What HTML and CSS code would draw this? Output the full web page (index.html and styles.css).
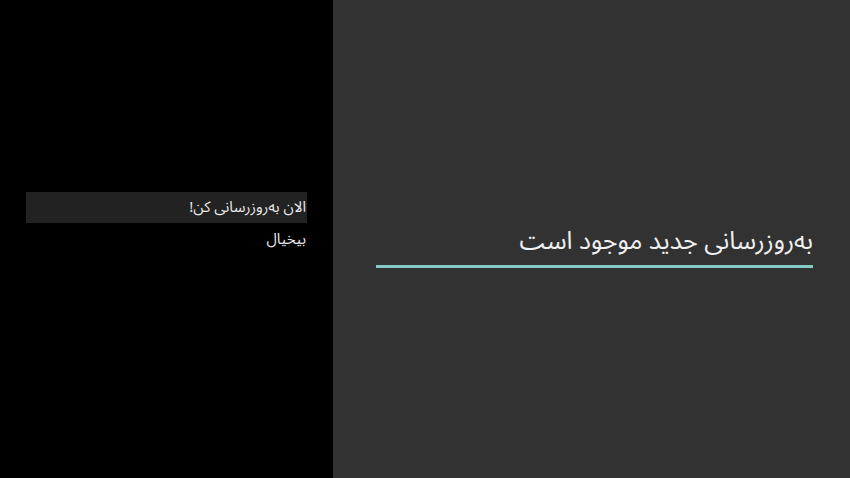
FILE: index.html
```html
<!DOCTYPE html>
<html lang="fa" dir="rtl">
<head>
<meta charset="utf-8">
<link rel="stylesheet" href="styles.css">
</head>
<body>
<div class="screen">
  <main class="content">
    <h1 class="title">بەروزرسانی جدید موجود است</h1>
    <div class="rule"></div>
  </main>
  <aside class="actions">
    <div class="action selected">الان بەروزرسانی کن!</div>
    <div class="action">بیخیال</div>
  </aside>
</div>
</body>
</html>
```

FILE: styles.css
```css
html, body {
  margin: 0;
  padding: 0;
  background: #000;
}
body {
  font-family: "Noto Sans Arabic", "Noto Sans", "DejaVu Sans", sans-serif;
  color: #f2f2f2;
}
.screen {
  display: flex;
  flex-direction: row;
  width: 850px;
  height: 478px;
  overflow: hidden;
}
.content {
  flex: 1;
  background: #323232;
  display: flex;
  flex-direction: column;
  padding: 224px 37px 0 43px;
}
.title {
  margin: 0;
  font-weight: normal;
  font-size: 25px;
  line-height: 34px;
  color: #f0f0f0;
  text-align: right;
}
.rule {
  height: 3px;
  background: #80cbc4;
  margin-top: 7px;
}
.actions {
  width: 281px;
  padding: 192px 26px 0 26px;
  display: flex;
  flex-direction: column;
  background: #000;
}
.action {
  height: 31px;
  line-height: 31px;
  font-size: 15px;
  padding: 0 1px;
  text-align: right;
  color: #e8e8e8;
}
.action.selected {
  background: #222;
  margin-bottom: 1px;
}
```
